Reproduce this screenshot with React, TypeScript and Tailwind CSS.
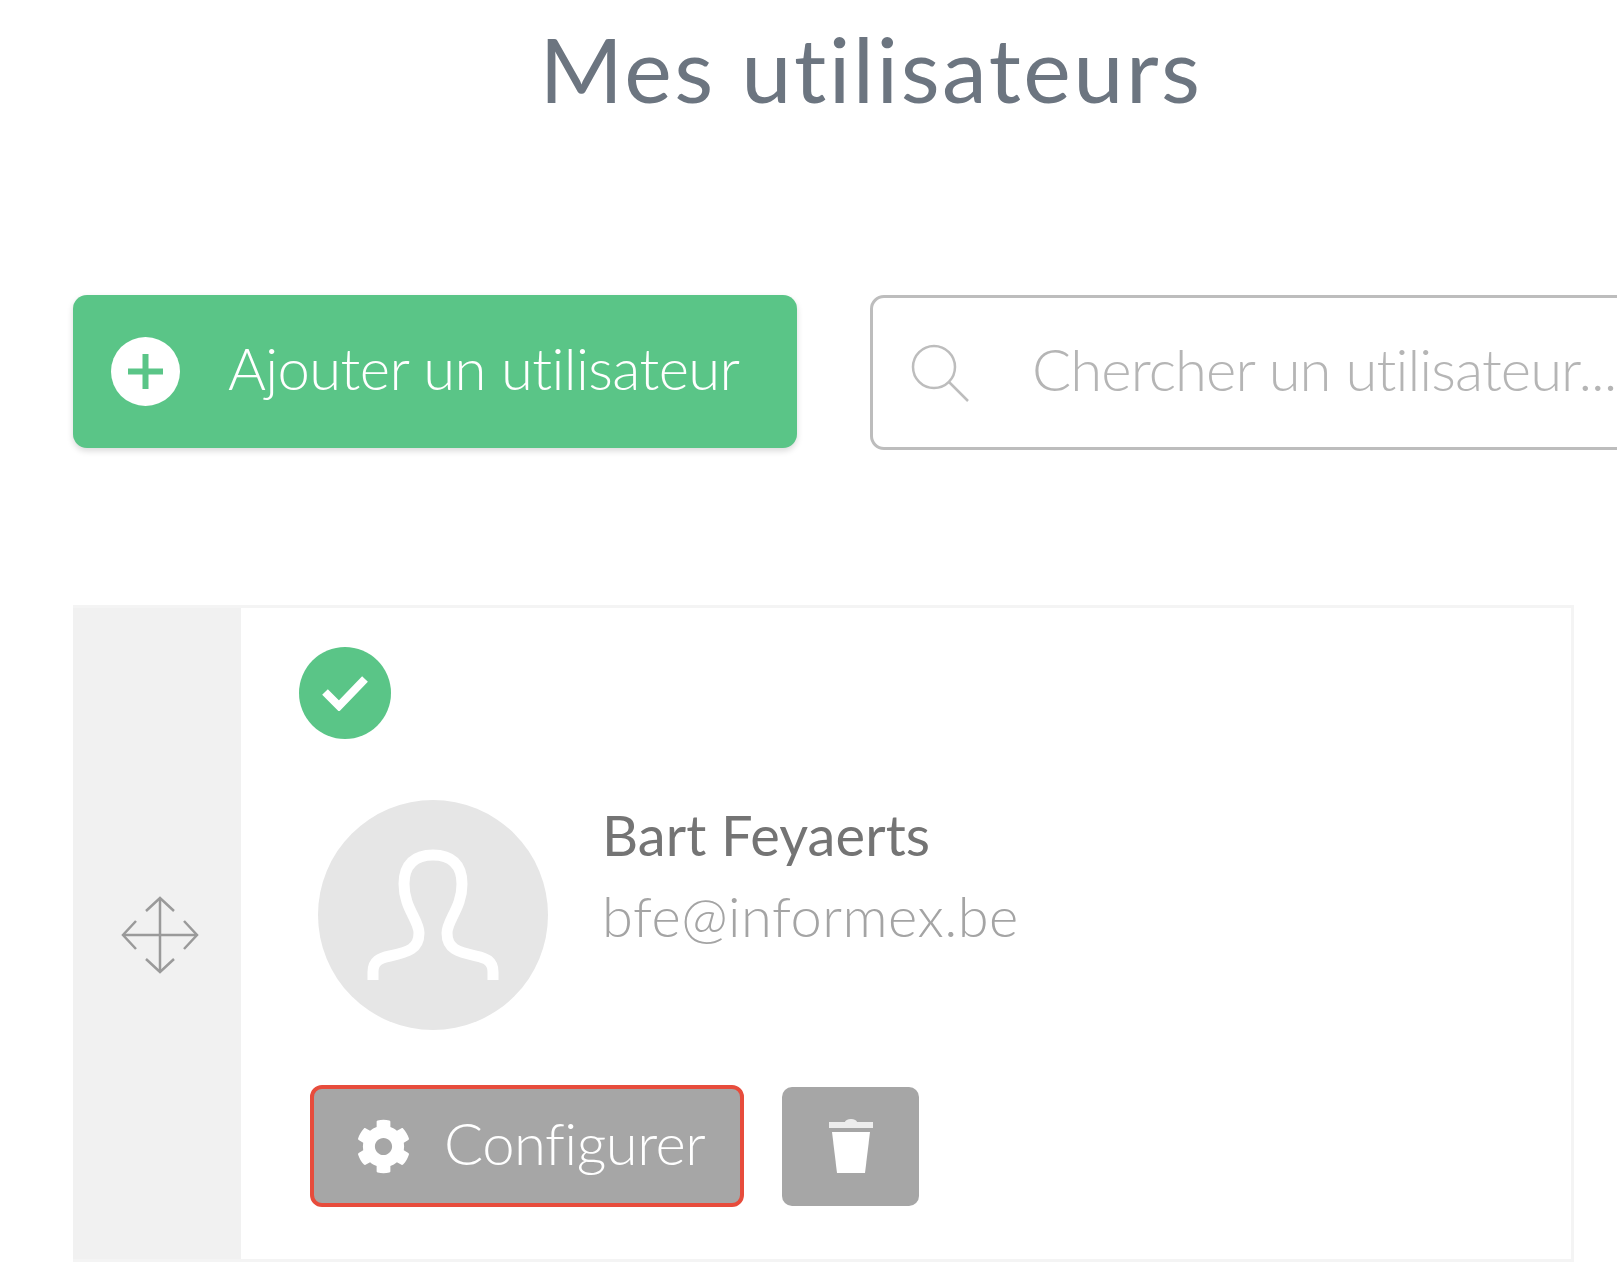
import { FaCog } from "react-icons/fa";

function PlusCircle() {
  return (
    <svg width="69" height="69" viewBox="0 0 69 69" className="shrink-0">
      <circle cx="34.5" cy="34.5" r="34.5" fill="#fff" />
      <path d="M34.5 17v35M17 34.5h35" stroke="#5ac587" strokeWidth="6" />
    </svg>
  );
}

function SearchIcon() {
  return (
    <svg width="58" height="58" viewBox="0 0 58 58" fill="none" className="shrink-0">
      <circle cx="23" cy="23" r="21" stroke="#bdbdbd" strokeWidth="2.5" />
      <path d="M38 38l19 19" stroke="#bdbdbd" strokeWidth="2.5" />
    </svg>
  );
}

function MoveIcon() {
  return (
    <svg width="78" height="78" viewBox="0 0 78 78" fill="none" stroke="#9a9a9a" strokeWidth="2.5">
      <path d="M39 2v74M2 39h74" />
      <path d="M25 15L39 2l14 13M25 63l14 13 14-13M15 25L2 39l13 14M63 25l13 14-13 14" />
    </svg>
  );
}

function UserOutline() {
  return (
    <svg width="230" height="230" viewBox="0 0 230 230" fill="none">
      <path
        d="M55 180V172C55 161 62 158 72 156C90 152 101 149 101 133C101 120 86 108 86 84C86 64 97 55 115 55C133 55 144 64 144 84C144 108 129 120 129 133C129 149 140 152 158 156C168 158 175 161 175 172V180"
        stroke="#fff"
        strokeWidth="11"
      />
    </svg>
  );
}

function TrashIcon() {
  return (
    <svg width="46" height="55" viewBox="0 0 46 55" fill="#fff">
      <path d="M17 3a6 3 0 0 1 12 0h16v6H1V3z" opacity="0.8" />
      <path d="M4 13h38l-5 41H9z" />
    </svg>
  );
}

export default function App() {
  return (
    <div className="w-[1617px] h-[1283px] overflow-hidden bg-white font-['Lato','Liberation_Sans',sans-serif]">
      <h1 className="pl-[125px] pt-[12px] h-[295px] text-center text-[90px] leading-[112px] font-normal tracking-[2.5px] text-[#6c7580]">
        Mes utilisateurs
      </h1>

      <div className="flex gap-[73px] pl-[73px]">
        <button className="flex items-center w-[724px] h-[153px] shrink-0 rounded-[14px] bg-[#5ac587] pl-[38px] shadow-[0_3px_6px_rgba(0,0,0,0.15)]">
          <PlusCircle />
          <span className="ml-[48px] mb-[8px] text-[58px] font-light tracking-[-0.6px] text-white">Ajouter un utilisateur</span>
        </button>
        <div className="flex items-center w-[800px] h-[155px] shrink-0 rounded-[14px] border-[3px] border-[#bdbdbd] pl-[38px]">
          <SearchIcon />
          <span className="ml-[63px] mb-[8px] text-[58px] font-light tracking-[-0.9px] text-[#b5b5b5]">Chercher un utilisateur...</span>
        </div>
      </div>

      <div className="ml-[73px] mt-[155px] flex w-[1501px] h-[657px] border-[3px] border-l-0 border-[#f4f4f4]">
        <div className="flex w-[168px] shrink-0 items-center justify-center bg-[#f1f1f1] pt-[2px] pl-[6px]">
          <MoveIcon />
        </div>
        <div className="flex-1 pl-[58px] pt-[39px]">
          <div className="flex h-[92px] w-[92px] items-center justify-center rounded-full bg-[#5ac587]">
            <svg width="46" height="36" viewBox="0 0 46 36" fill="none">
              <path d="M3 17l14 14L43 4" stroke="#fff" strokeWidth="8" />
            </svg>
          </div>

          <div className="mt-[61px] ml-[19px] flex items-start">
            <div className="flex h-[230px] w-[230px] shrink-0 items-center justify-center rounded-full bg-[#e6e6e6]">
              <UserOutline />
            </div>
            <div className="ml-[54px] pt-[1px]">
              <div className="text-[56px] leading-[68px] font-normal tracking-[0.1px] text-[#747474]">Bart Feyaerts</div>
              <div className="mt-[13px] text-[56px] leading-[68px] font-light tracking-[0.5px] text-[#a4a4a4]">bfe@informex.be</div>
            </div>
          </div>

          <div className="mt-[55px] ml-[11px] flex items-center gap-[38px]">
            <button className="flex h-[122px] w-[434px] items-center rounded-[12px] border-[4px] border-[#e74c3c] bg-[#a6a6a6] pl-[42px]">
              <FaCog className="h-[55px] w-[55px] text-white" />
              <span className="ml-[33px] mb-[8px] text-[58px] font-light tracking-[-0.5px] text-white">Configurer</span>
            </button>
            <button className="flex h-[119px] w-[137px] items-center justify-center rounded-[10px] bg-[#a6a6a6]">
              <TrashIcon />
            </button>
          </div>
        </div>
      </div>
    </div>
  );
}
